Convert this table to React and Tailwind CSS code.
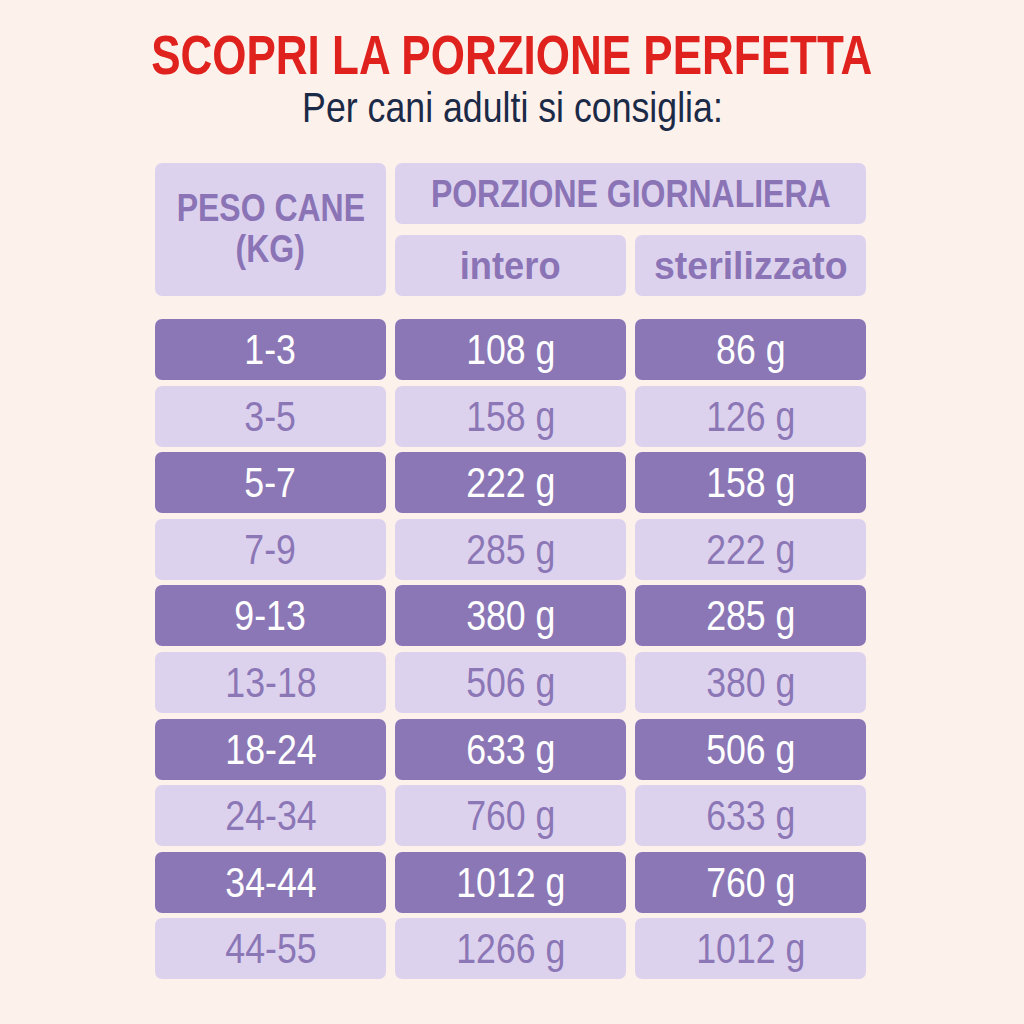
import React from "react";

const rows = [
  ["1-3", "108 g", "86 g"],
  ["3-5", "158 g", "126 g"],
  ["5-7", "222 g", "158 g"],
  ["7-9", "285 g", "222 g"],
  ["9-13", "380 g", "285 g"],
  ["13-18", "506 g", "380 g"],
  ["18-24", "633 g", "506 g"],
  ["24-34", "760 g", "633 g"],
  ["34-44", "1012 g", "760 g"],
  ["44-55", "1266 g", "1012 g"],
];

const font = { fontFamily: '"Liberation Sans", Arial, sans-serif' };

export default function App() {
  return (
    <div className="w-[1024px] h-[1024px] bg-[#fdf1ec] flex flex-col items-center" style={font}>
      <h1 className="mt-[25px] text-[#e0221e] font-bold text-[55px] leading-[60px] whitespace-nowrap inline-block scale-x-[0.8]">
        SCOPRI LA PORZIONE PERFETTA
      </h1>
      <p className="mt-[1px] text-[#1b2a47] text-[42px] leading-[44px] whitespace-nowrap inline-block scale-x-[0.85]">
        Per cani adulti si consiglia:
      </p>

      <div className="mt-[33px] mr-[3px] w-[711px] flex gap-[9px]">
        <div className="w-[231px] shrink-0 h-[133px] rounded-[7px] bg-[#ddd2ee] text-[#8a74b5] font-bold text-[39px] leading-[41px] flex flex-col items-center justify-center pb-[4px]">
          <span className="inline-block whitespace-nowrap scale-x-[0.82]">PESO CANE</span>
          <span className="inline-block whitespace-nowrap scale-x-[0.82]">(KG)</span>
        </div>
        <div className="w-[471px] shrink-0 flex flex-col gap-[11px]">
          <div className="h-[61px] rounded-[7px] bg-[#ddd2ee] text-[#8a74b5] font-bold text-[39px] leading-none flex items-center justify-center overflow-visible">
            <span className="inline-block whitespace-nowrap scale-x-[0.82]">PORZIONE GIORNALIERA</span>
          </div>
          <div className="flex gap-[9px]">
            <div className="w-[231px] shrink-0 h-[61px] rounded-[7px] bg-[#ddd2ee] text-[#8a74b5] font-bold text-[39px] leading-none flex items-center justify-center">
              <span className="inline-block whitespace-nowrap scale-x-[0.93]">intero</span>
            </div>
            <div className="w-[231px] shrink-0 h-[61px] rounded-[7px] bg-[#ddd2ee] text-[#8a74b5] font-bold text-[39px] leading-none flex items-center justify-center">
              <span className="inline-block whitespace-nowrap scale-x-[0.96]">sterilizzato</span>
            </div>
          </div>
        </div>
      </div>

      <div className="mt-[23px] mr-[3px] w-[711px] flex flex-col gap-[5.6px]">
        {rows.map((r, i) => {
          const dark = i % 2 === 0;
          const cell = dark ? "bg-[#8c77b6] text-white" : "bg-[#ddd2ee] text-[#8c77b6]";
          return (
            <div key={i} className="flex gap-[9px]">
              {r.map((t, j) => (
                <div
                  key={j}
                  className={`w-[231px] shrink-0 h-[61px] rounded-[7px] ${cell} text-[43px] leading-none flex items-center justify-center`}
                >
                  <span className="inline-block whitespace-nowrap scale-x-[0.83]">{t}</span>
                </div>
              ))}
            </div>
          );
        })}
      </div>
    </div>
  );
}
